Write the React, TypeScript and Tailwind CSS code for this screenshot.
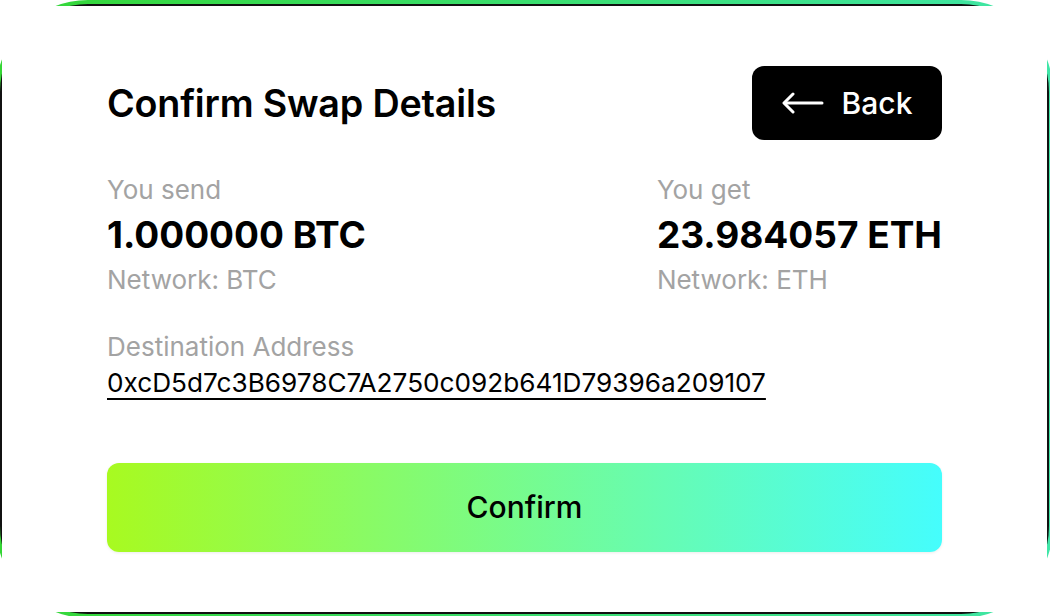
import React from "react";

const swap = {
  send: { amount: "1.000000 BTC", network: "BTC" },
  get: { amount: "23.984057 ETH", network: "ETH" },
  address: "0xcD5d7c3B6978C7A2750c092b641D79396a209107",
};

function ArrowLeft() {
  return (
    <svg width="42" height="22" viewBox="0 0 42 22" fill="none" stroke="currentColor" strokeWidth="3" strokeLinecap="round" strokeLinejoin="round">
      <path d="M40 11H3" />
      <path d="M11 2L2 11l9 9" />
    </svg>
  );
}

export default function App() {
  return (
    <div className="h-[616px] w-full overflow-hidden bg-white" style={{ fontFamily: "Inter, 'Noto Sans', sans-serif" }}>
      {/* gradient frame, cropped by the window; the square white card hides its corners */}
      <div className="-ml-[4px] -mr-[3px] h-[618px] rounded-[92px] bg-linear-to-r/srgb from-[#34d634] to-[#40e6a8] p-[4px]">
        <div className="h-full rounded-[88px] bg-[#111] p-[2px]">
          <div className="h-full bg-white px-[105px] pt-[60px]">
            {/* Header */}
            <div className="flex items-center justify-between">
              <h1 className="text-[37.7px] font-semibold tracking-[-0.2px] text-black">Confirm Swap Details</h1>
              <button className="flex h-[74px] w-[190px] items-center justify-center gap-[18px] rounded-xl bg-black text-white">
                <ArrowLeft />
                <span className="text-[30px] font-medium">Back</span>
              </button>
            </div>

            {/* Amounts */}
            <div className="mt-[34px] flex justify-between">
              <div>
                <div className="text-[26px] leading-[32px] text-[#a3a3a3]">You send</div>
                <div className="mt-[7px] text-[37px] font-bold leading-[44px] text-black">{swap.send.amount}</div>
                <div className="mt-[7px] text-[26px] leading-[32px] text-[#a3a3a3]">Network: {swap.send.network}</div>
              </div>
              <div>
                <div className="text-[26px] leading-[32px] text-[#a3a3a3]">You get</div>
                <div className="mt-[7px] text-[37px] font-bold leading-[44px] text-black">{swap.get.amount}</div>
                <div className="mt-[7px] text-[26px] leading-[32px] text-[#a3a3a3]">Network: {swap.get.network}</div>
              </div>
            </div>

            {/* Destination */}
            <div className="mt-[35px]">
              <div className="text-[26px] leading-[32px] text-[#a3a3a3]">Destination Address</div>
              <a className="mt-[4px] block w-fit text-[26.2px] leading-[32px] text-black underline decoration-2 underline-offset-[6px]">{swap.address}</a>
            </div>

            <button className="mt-[64px] flex h-[89px] w-full items-center justify-center rounded-xl bg-linear-to-r/srgb from-[#a8fa20] to-[#45fdfd] text-[30px] font-medium text-black shadow-[0_1px_3px_rgba(0,0,0,0.08)]">
              Confirm
            </button>
          </div>
        </div>
      </div>
    </div>
  );
}
